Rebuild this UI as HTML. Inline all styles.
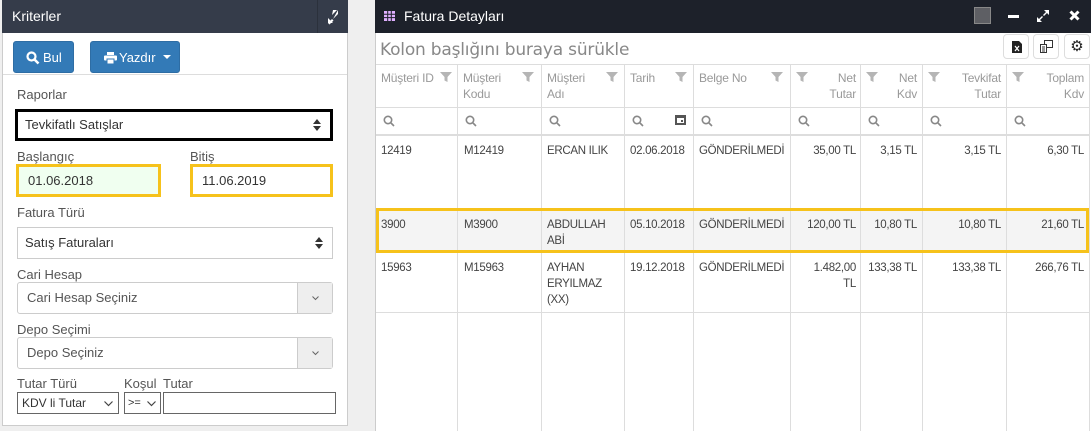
<!DOCTYPE html><html><head><meta charset="utf-8"><style>
*{box-sizing:border-box;margin:0;padding:0}
body{width:1091px;height:431px;background:#efefef;font-family:"Liberation Sans",sans-serif;font-size:12px;color:#333;position:relative;overflow:hidden}
.a{position:absolute}
.lp{left:2px;top:0;width:346px;height:426px;background:#fff;border:1px solid #ccc;border-top:none}
.lh{left:2px;top:0;width:346px;height:33px;background:#353c4a;color:#fff;font-size:14px;padding:8px 10px}
.btn{background:#337ab7;border:1px solid #2e6da4;border-radius:3px;color:#fff;font-size:13px;line-height:31px}
.lbl{font-size:13px;color:#555}
.sel{border:1px solid #ccc;background:#fff;font-size:13px;padding-left:7px;line-height:30px}
.rp{left:375px;top:0;width:716px;height:431px;background:#fff;border-left:1px solid #ccc}
.rh{left:375px;top:0;width:716px;height:33px;background:#1d212a;color:#fff;font-size:14px}
.vl{position:absolute;top:64px;bottom:0;width:1px;background:#ddd}
.hl{position:absolute;left:376px;right:2px;height:1px;background:#ddd}
.hd{position:absolute;top:70px;color:#999;font-size:12px;line-height:16px;letter-spacing:-0.2px}
.c{position:absolute;font-size:11.5px;color:#444;line-height:16px;letter-spacing:-0.3px}
.r{text-align:right}
.ud{position:absolute;right:9px;top:50%;margin-top:-6px;width:8px;height:12px}
</style></head><body>
<div class="a lp"></div>
<div class="a lh">Kriterler</div>
<div class="a" style="left:317px;top:0;width:31px;height:33px;border-left:1px solid #2b313c"><svg width="31" height="33"><path d="M10 22l10-10M15 11h6v6M10 16v7h7" fill="none" stroke="#fff" stroke-width="0"/><path d="M10 23l4-4 1.5 1.5-4 4zM14 15l5-5h-4zM20 10v4l-5 5zM10 23v-5l5 5z" fill="#fff"/></svg></div>
<div class="a" style="left:3px;top:74px;width:344px;height:1px;background:#ddd"></div>
<div class="a btn" style="left:13px;top:41px;width:61px;height:32px"><svg class="a" style="left:12px;top:9px" width="14" height="14"><circle cx="5.5" cy="5.5" r="4" fill="none" stroke="#fff" stroke-width="2.2"/><path d="M8.5 8.5l4 4" stroke="#fff" stroke-width="2.6"/></svg><span class="a" style="left:29px;font-weight:normal">Bul</span></div>
<div class="a btn" style="left:90px;top:41px;width:90px;height:32px"><svg class="a" style="left:13px;top:10px" width="13" height="12"><rect x="3" y="0" width="7" height="3" fill="#fff"/><rect x="0" y="3.5" width="13" height="5" rx="1" fill="#fff"/><rect x="3" y="7" width="7" height="5" fill="#fff" stroke="#337ab7" stroke-width="1"/></svg><span class="a" style="left:28px">Yazdır</span><span class="a" style="left:72px;top:13px;border:4px solid transparent;border-top-color:#fff;border-bottom:none;width:0;height:0"></span></div>
<div class="a lbl" style="left:17px;top:87px">Raporlar</div>
<svg width="0" height="0" style="position:absolute"><defs><g id="ud"><path d="M0 5L4 0L8 5z M0 7L4 12L8 7z" fill="#333"/></g></defs></svg>
<div class="a sel" style="left:15px;top:109px;width:318px;height:32px;border:3px solid #000;line-height:26px;color:#333">Tevkifatlı Satışlar<svg class="ud" viewBox="0 0 8 12"><use href="#ud"/></svg></div>
<div class="a lbl" style="left:17px;top:149px">Başlangıç</div>
<div class="a lbl" style="left:190px;top:149px">Bitiş</div>
<div class="a" style="left:16px;top:164px;width:145px;height:33px;border:3px solid #f6c21b;background:#f0fff0;font-size:13px;padding-left:9px;line-height:27px">01.06.2018</div>
<div class="a" style="left:190px;top:164px;width:143px;height:33px;border:3px solid #f6c21b;background:#fff;font-size:13px;padding-left:9px;line-height:27px">11.06.2019</div>
<div class="a lbl" style="left:17px;top:205px">Fatura Türü</div>
<div class="a sel" style="left:17px;top:227px;width:316px;height:32px">Satış Faturaları<svg class="ud" viewBox="0 0 8 12"><use href="#ud"/></svg></div>
<div class="a lbl" style="left:17px;top:267px">Cari Hesap</div>
<div class="a sel" style="left:17px;top:282px;width:316px;height:32px;border-radius:3px;color:#555;padding-left:9px">Cari Hesap Seçiniz<span style="position:absolute;right:0;top:0;width:35px;height:30px;background:#eee;border-left:1px solid #ccc"><svg class="a" style="left:14px;top:13px" width="7" height="5"><path d="M0.5 0.5l3 3 3-3" fill="none" stroke="#666"/></svg></span></div>
<div class="a lbl" style="left:17px;top:322px">Depo Seçimi</div>
<div class="a sel" style="left:17px;top:337px;width:316px;height:32px;border-radius:3px;color:#555;padding-left:9px">Depo Seçiniz<span style="position:absolute;right:0;top:0;width:35px;height:30px;background:#eee;border-left:1px solid #ccc"><svg class="a" style="left:14px;top:13px" width="7" height="5"><path d="M0.5 0.5l3 3 3-3" fill="none" stroke="#666"/></svg></span></div>
<div class="a lbl" style="left:17px;top:376px">Tutar Türü</div>
<div class="a lbl" style="left:124px;top:376px">Koşul</div>
<div class="a lbl" style="left:163px;top:376px">Tutar</div>
<div class="a" style="left:17px;top:392px;width:102px;height:22px;border:1px solid #666;font-size:12px;padding-left:4px;line-height:20px">KDV li Tutar<svg class="a" style="right:5px;top:8px" width="9" height="6"><path d="M0.5 0.5l4 4 4-4" fill="none" stroke="#444" stroke-width="1.2"/></svg></div>
<div class="a" style="left:124px;top:392px;width:37px;height:22px;border:1px solid #666;font-size:11px;padding-left:3px;line-height:20px">&gt;=<svg class="a" style="right:4px;top:8px" width="9" height="6"><path d="M0.5 0.5l4 4 4-4" fill="none" stroke="#444" stroke-width="1.2"/></svg></div>
<div class="a" style="left:163px;top:392px;width:173px;height:22px;border:1px solid #666"></div>

<div class="a rp"></div>
<div class="a rh"><svg class="a" style="left:9px;top:11px" width="11" height="10"><rect x="0" y="0" width="11" height="10" fill="#e0b0ff"/><path d="M0 3.3h11M0 6.6h11M3.7 0v10M7.3 0v10" stroke="#1d212a" stroke-width="1"/></svg><span style="position:absolute;left:29px;top:8px">Fatura Detayları</span>
<div class="a" style="left:599px;top:7px;width:17px;height:17px;background:#5e5f64;border:1px solid #888"></div>
<div class="a" style="left:633px;top:15px;width:11px;height:3px;background:#fff"></div>
<svg class="a" style="left:662px;top:10px" width="12" height="12"><path d="M0 12v-5l5 5zM12 0v5l-5-5zM1 10l4-4 1 1-4 4zM11 2l-4 4-1-1 4-4z" fill="#fff"/></svg>
<svg class="a" style="left:694px;top:10px" width="11" height="11"><path d="M1.5 1.5l8 8M9.5 1.5l-8 8" stroke="#fff" stroke-width="3"/></svg>
</div>
<div class="a" style="left:380px;top:40px;color:#888;font-family:'DejaVu Sans',sans-serif;font-size:17px;letter-spacing:-0.2px">Kolon başlığını buraya sürükle</div>
<div class="a" style="left:1003px;top:34px;width:26px;height:25px;border:1px solid #ddd;border-radius:4px"><svg class="a" style="left:8px;top:6px" width="10" height="12"><path d="M0 0h7l3 3v9H0z" fill="#222"/><path d="M3 5l4 5M7 5l-4 5" stroke="#fff" stroke-width="1.2"/></svg></div>
<div class="a" style="left:1033px;top:34px;width:26px;height:25px;border:1px solid #ddd;border-radius:4px"><svg class="a" style="left:6px;top:5px" width="13" height="13"><rect x="4.5" y="0.5" width="8" height="7" fill="none" stroke="#333"/><rect x="0.5" y="4.5" width="6" height="8" fill="#fff" stroke="#333"/><path d="M2 7h3M2 9h3M2 11h3" stroke="#333"/></svg></div>
<div class="a" style="left:1064px;top:34px;width:26px;height:25px;border:1px solid #ddd;border-radius:4px;text-align:center;line-height:23px;font-size:15px;color:#222">⚙</div>
<div class="hl" style="top:64px"></div>
<div class="hl" style="top:107px"></div>
<div class="hl" style="top:134px;height:2px"></div>
<div class="hl" style="top:252px"></div>
<div class="hl" style="top:312px"></div>
<div class="a" style="left:376px;top:208px;width:713px;height:45px;background:#f4f4f4"></div>
<div class="vl" style="left:457px"></div><div class="vl" style="left:541px"></div><div class="vl" style="left:624px"></div><div class="vl" style="left:693px"></div><div class="vl" style="left:790px"></div><div class="vl" style="left:860px"></div><div class="vl" style="left:922px"></div><div class="vl" style="left:1006px"></div><div class="vl" style="left:1089px"></div>
<div class="a" style="left:376px;top:208px;width:713px;height:45px;border:3px solid #f6c21b"></div>

<div class="hd" style="left:381px">Müşteri ID</div>
<div class="hd" style="left:463px">Müşteri<br>Kodu</div>
<div class="hd" style="left:547px">Müşteri<br>Adı</div>
<div class="hd" style="left:630px">Tarih</div>
<div class="hd" style="left:699px">Belge No</div>
<div class="hd r" style="left:796px;width:60px">Net<br>Tutar</div>
<div class="hd r" style="left:866px;width:51px">Net<br>Kdv</div>
<div class="hd r" style="left:928px;width:73px">Tevkifat<br>Tutar</div>
<div class="hd r" style="left:1012px;width:72px">Toplam<br>Kdv</div>
<svg class="a" style="left:0;top:0" width="1091" height="140">
<g fill="#b5b5b5">
<path id="f" d="M440 72h12l-4.5 5v5l-3-1.5v-3.5z"/>
<use href="#f" x="82"/><use href="#f" x="166"/><use href="#f" x="235"/><use href="#f" x="331"/><use href="#f" x="356"/><use href="#f" x="426"/><use href="#f" x="488"/><use href="#f" x="572"/>
</g>
<g fill="none" stroke="#888" stroke-width="1.6">
<g id="s"><circle cx="388" cy="120" r="3.7"/><path d="M391 123l3 3"/></g>
<use href="#s" x="82"/><use href="#s" x="166"/><use href="#s" x="249"/><use href="#s" x="318"/><use href="#s" x="415"/><use href="#s" x="485"/><use href="#s" x="547"/><use href="#s" x="631"/>
</g>
<rect x="675" y="115" width="11" height="10" fill="#555"/><rect x="677" y="118" width="7" height="5" fill="#fff"/><rect x="681" y="120" width="2" height="2" fill="#555"/>
</svg>

<div class="c" style="left:381px;top:143px">12419</div>
<div class="c" style="left:464px;top:143px">M12419</div>
<div class="c" style="left:547px;top:143px">ERCAN ILIK</div>
<div class="c" style="left:630px;top:143px">02.06.2018</div>
<div class="c" style="left:699px;top:143px">GÖNDERİLMEDİ</div>
<div class="c r" style="left:796px;width:60px;top:143px">35,00 TL</div>
<div class="c r" style="left:862px;width:55px;top:143px">3,15 TL</div>
<div class="c r" style="left:928px;width:73px;top:143px">3,15 TL</div>
<div class="c r" style="left:1012px;width:72px;top:143px">6,30 TL</div>

<div class="c" style="left:381px;top:217px">3900</div>
<div class="c" style="left:464px;top:217px">M3900</div>
<div class="c" style="left:547px;top:217px">ABDULLAH<br>ABİ</div>
<div class="c" style="left:630px;top:217px">05.10.2018</div>
<div class="c" style="left:699px;top:217px">GÖNDERİLMEDİ</div>
<div class="c r" style="left:796px;width:60px;top:217px">120,00 TL</div>
<div class="c r" style="left:862px;width:55px;top:217px">10,80 TL</div>
<div class="c r" style="left:928px;width:73px;top:217px">10,80 TL</div>
<div class="c r" style="left:1012px;width:72px;top:217px">21,60 TL</div>

<div class="c" style="left:381px;top:260px">15963</div>
<div class="c" style="left:464px;top:260px">M15963</div>
<div class="c" style="left:547px;top:260px">AYHAN<br>ERYILMAZ<br>(XX)</div>
<div class="c" style="left:630px;top:260px">19.12.2018</div>
<div class="c" style="left:699px;top:260px">GÖNDERİLMEDİ</div>
<div class="c r" style="left:796px;width:60px;top:260px">1.482,00<br>TL</div>
<div class="c r" style="left:862px;width:55px;top:260px">133,38 TL</div>
<div class="c r" style="left:928px;width:73px;top:260px">133,38 TL</div>
<div class="c r" style="left:1012px;width:72px;top:260px">266,76 TL</div>
</body></html>
